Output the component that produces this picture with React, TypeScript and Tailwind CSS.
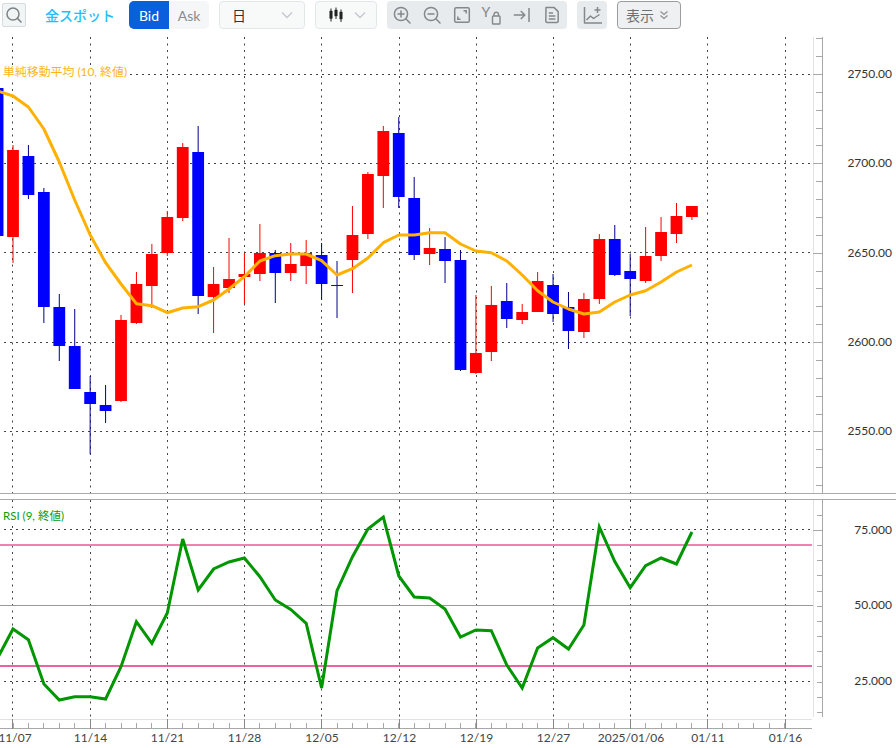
import React from "react";

const latin = { fontFamily: 'Lato, "Noto Sans CJK JP", sans-serif' };
const step = 15.43;
const cx = (i: number) => 13 + step * (i - 1);
const gridX = [12.5, 90.5, 167.5, 244.5, 321.5, 399.5, 476.5, 553.5, 630.5, 707.5, 785.5];

// [wick high, body top, body bottom, wick low, 0=blue 1=red]
const candles: [number, number, number, number, number][] = [
  [86, 88, 236, 237, 0], [145, 150, 237, 263, 1], [145, 156, 195, 199, 0], [188, 192, 307, 323, 0],
  [294, 307, 346, 361, 0], [309, 346, 389, 389, 0], [376, 392, 404, 454, 0], [385, 405, 411, 423, 0],
  [315, 320, 401, 402, 1], [272, 284, 323, 324, 1], [244, 254, 286, 308, 1], [211, 217, 253, 256, 1],
  [143, 147, 218, 221, 1], [126, 152, 296, 314, 0], [267, 284, 297, 333, 1], [238, 279, 288, 293, 1],
  [253, 274, 277, 304, 1], [224, 253, 274, 281, 1], [250, 253, 273, 303, 0], [243, 264, 273, 281, 1],
  [240, 253, 266, 284, 1], [243, 255, 284, 300, 0], [261, 285, 286, 318, 0], [206, 235, 260, 293, 1],
  [172, 174, 234, 239, 1], [126, 131, 176, 208, 1], [117, 133, 197, 208, 0], [177, 198, 255, 260, 0],
  [228, 248, 254, 265, 1], [237, 249, 261, 283, 0], [250, 260, 370, 371, 0], [295, 353, 373, 374, 1],
  [286, 305, 352, 361, 1], [283, 301, 319, 328, 0], [304, 312, 320, 324, 1], [272, 281, 312, 312, 1],
  [274, 285, 314, 322, 0], [292, 307, 331, 349, 0], [293, 299, 332, 338, 1], [234, 239, 299, 304, 1],
  [225, 239, 275, 276, 0], [254, 271, 279, 316, 0], [227, 256, 281, 283, 1], [217, 232, 256, 261, 1],
  [203, 216, 234, 243, 1], [206, 206, 217, 220, 1],
];

const ma = [91, 96, 107, 129, 162, 200, 235, 262.7, 284, 303.7, 305.7, 312.7, 308, 306.7, 300, 289, 276.7, 261, 255.7, 254, 254, 260.7, 275, 268.7, 258, 242.7, 235, 235, 232.7, 232.7, 244, 251, 252.7, 261, 275, 290.7, 302, 309, 314, 312, 302, 295, 290.7, 282, 272, 265];
const rsi = [658, 629, 639.7, 684, 700, 696.7, 696.7, 699, 666.7, 621.7, 643.3, 613, 539, 590, 569, 562, 558, 576.7, 600, 609.5, 623.3, 688, 590.7, 556.7, 529, 517, 576, 597, 598, 609, 637, 630, 630.7, 665, 688, 648, 637.7, 649, 625, 527, 561.5, 587.7, 565.7, 558, 564, 532];

const pts = (ys: number[]) => ys.map((y, i) => `${cx(i).toFixed(1)},${y}`).join(" ");

const Ico = ({ children, w = 20 }: { children: React.ReactNode; w?: number }) => (
  <svg width={w} height={20} viewBox="0 0 20 20" fill="none" stroke="#85888b" strokeWidth="1.5" strokeLinecap="round" strokeLinejoin="round">
    {children}
  </svg>
);

const IconBtn = ({ children }: { children: React.ReactNode }) => (
  <div className="flex w-[30px] items-center justify-center">{children}</div>
);

const Chevron = () => (
  <svg width="12" height="8" viewBox="0 0 12 8" fill="none" stroke="#c3c9cd" strokeWidth="1.4">
    <path d="M1 1.5 L6 6.5 L11 1.5" />
  </svg>
);

function Toolbar() {
  return (
    <div className="flex h-[30px] items-center text-[14px]" style={latin}>
      <div className="ml-[2px] flex h-[24px] w-[24px] items-center justify-center rounded-[2px] border border-[#d5dcdf] bg-[#f2f5f6]">
        <svg width="18" height="18" viewBox="0 0 18 18" fill="none" stroke="#7c8488" strokeWidth="1.5">
          <circle cx="8" cy="8" r="6" />
          <path d="M12.4 12.4 L16.5 16.5" />
        </svg>
      </div>
      <div className="ml-[19px] w-[70px] whitespace-nowrap text-[14px] font-medium text-[#1ec0fb]">金スポット</div>
      <div className="ml-[14px] flex h-[28px] w-[80px] overflow-hidden rounded-[5px]">
        <div className="flex w-[40px] items-center justify-center bg-[#0a5fdc] text-white">Bid</div>
        <div className="flex w-[40px] items-center justify-center bg-[#f5f6f7] text-[#878c91]">Ask</div>
      </div>
      <div className="ml-[10px] flex h-[28px] w-[86px] items-center justify-between rounded-[4px] border border-[#e2e7ea] bg-[#f8fafa] pl-[12px] pr-[11px] text-[#333]">
        <span>日</span>
        <Chevron />
      </div>
      <div className="ml-[10px] flex h-[28px] w-[62px] items-center justify-between rounded-[4px] border border-[#e2e7ea] bg-[#f8fafa] pl-[12px] pr-[10px]">
        <svg width="16" height="16" viewBox="0 0 16 16" stroke="#222" fill="#222">
          <path d="M3 1.5 V14.5 M8 0.5 V12 M13 2.5 V15" strokeWidth="1" />
          <rect x="1.8" y="4" width="2.4" height="7.5" strokeWidth="0.4" />
          <rect x="6.8" y="3" width="2.4" height="6" strokeWidth="0.4" />
          <rect x="11.8" y="5" width="2.4" height="7" strokeWidth="0.4" />
        </svg>
        <Chevron />
      </div>
      <div className="ml-[10px] flex h-[28px] w-[180px] rounded-[4px] bg-[#e7ebed]">
        <IconBtn>
          <Ico>
            <circle cx="9" cy="9" r="6.6" />
            <path d="M18 18 L13.8 13.8 M9 6 V12 M6 9 H12" />
          </Ico>
        </IconBtn>
        <IconBtn>
          <Ico>
            <circle cx="9" cy="9" r="6.6" />
            <path d="M18 18 L13.8 13.8 M6 9 H12" />
          </Ico>
        </IconBtn>
        <IconBtn>
          <Ico>
            <rect x="2.7" y="2.7" width="14.6" height="14.6" rx="1.5" />
            <path d="M11.5 5.8 H14.2 V8.5 M5.8 11.5 V14.2 H8.5" strokeLinecap="butt" strokeLinejoin="miter" />
          </Ico>
        </IconBtn>
        <IconBtn>
          <svg width="22" height="24" viewBox="0 0 22 24" fill="none" stroke="#85888b" strokeWidth="1.4">
            <text x="0.5" y="14" fontSize="14" fill="#85888b" stroke="none" style={latin}>Y</text>
            <rect x="11.5" y="13" width="7.5" height="8" rx="0.8" />
            <path d="M13 13 V11 A2.3 2.3 0 0 1 17.5 11 V13" />
          </svg>
        </IconBtn>
        <IconBtn>
          <Ico>
            <path d="M1.8 10 H12.6 M8.8 6 L12.8 10 L8.8 14" strokeLinecap="butt" />
            <path d="M17 3 V17" strokeLinecap="butt" />
          </Ico>
        </IconBtn>
        <IconBtn>
          <Ico>
            <path d="M4 2.6 H12.2 L16.2 6.6 V16.2 A1.2 1.2 0 0 1 15 17.4 H5 A1.2 1.2 0 0 1 3.8 16.2 Z" />
            <path d="M6.8 8 H11 M6.8 11 H13.4 M6.8 14 H13.4" strokeLinecap="butt" />
          </Ico>
        </IconBtn>
      </div>
      <div className="ml-[10px] flex h-[28px] w-[30px] items-center justify-center rounded-[4px] bg-[#e7ebed]">
        <Ico w={22}>
          <path d="M2.5 2 V18 H20" strokeLinecap="butt" />
          <path d="M4.5 15 L8.5 11 L11.5 13.5 L17.5 9.5" strokeLinecap="butt" />
          <path d="M15.5 2 V8 M12.5 5 H18.5" strokeLinecap="butt" />
        </Ico>
      </div>
      <div className="ml-[10px] flex h-[28px] w-[64px] items-center rounded-[4px] border border-[#9a9c9e] bg-[#eef0f1] pl-[8px] text-[#6c7075]">
        <span>表示</span>
        <svg className="ml-[5px]" width="10" height="10" viewBox="0 0 10 10" fill="none" stroke="#8b8f93" strokeWidth="1.1">
          <path d="M1.5 1.5 L5 4.5 L8.5 1.5 M1.5 5.5 L5 8.5 L8.5 5.5" />
        </svg>
      </div>
    </div>
  );
}

function VGrid({ y1, y2 }: { y1: number; y2: number }) {
  return (
    <>
      {gridX.map((x) => (
        <line key={x} x1={x} x2={x} y1={y1} y2={y2} stroke="#444" strokeDasharray="2 4.5" />
      ))}
    </>
  );
}

const HDash = ({ y }: { y: number }) => (
  <line x1="4" x2="813" y1={y} y2={y} stroke="#444" strokeDasharray="2 4" />
);

function MainPanel() {
  const labels: [number, string][] = [
    [74, "2750.00"], [163, "2700.00"], [253, "2650.00"], [342, "2600.00"], [431, "2550.00"],
  ];
  const ticks: number[] = [];
  for (let k = -2; k <= 23; k++) ticks.push(Math.round(74 + 17.87 * k) + 0.5);
  return (
    <svg className="block" width="896" height="463" viewBox="0 30 896 463" style={latin}>
      <VGrid y1={37} y2={493} />
      {labels.map(([y]) => (
        <HDash key={y} y={y + 0.5 - (y === 253 ? 1 : 0)} />
      ))}
      <line x1="813.5" x2="813.5" y1="37" y2="493" stroke="#e3e3e3" />
      <line x1="822.5" x2="822.5" y1="37" y2="493" stroke="#a8a8a8" />
      {ticks.filter((y) => y > 37 && y < 493).map((y, i) => (
        <line key={y} x1={i % 5 === 2 ? 813 : 816} x2="822" y1={y} y2={y} stroke="#a8a8a8" />
      ))}
      {candles.map(([hi, top, bot, lo, red], i) => {
        const x = cx(i);
        const c = red ? "#ff0000" : "#0000ff";
        return (
          <g key={i}>
            <line x1={x} x2={x} y1={hi} y2={lo} stroke={red ? "#ff0000" : "#00008b"} strokeWidth="1" />
            <rect x={x - 5.9} y={top} width="11.8" height={bot - top} fill={c} />
          </g>
        );
      })}
      <polyline points={pts(ma)} fill="none" stroke="#ffb000" strokeWidth="3" strokeLinejoin="round" />
      <rect x="0" y="65" width="128" height="15" fill="#fff" />
      <text x="3" y="76" fontSize="11.9" fill="#ffb512">単純移動平均 (10, 終値)</text>
      {labels.map(([y, t]) => (
        <text key={t} x="892" y={y + 4} fontSize="12" fill="#333" textAnchor="end">{t}</text>
      ))}
    </svg>
  );
}

function RsiPanel() {
  const ticks: number[] = [];
  for (let k = -1; k <= 12; k++) ticks.push(Math.round(530 + 15.15 * k));
  const dates: [number, string][] = [
    [15, "11/07"], [90.5, "11/14"], [167.5, "11/21"], [244.5, "11/28"], [322, "12/05"], [399.5, "12/12"],
    [476.5, "12/19"], [553.5, "12/27"], [631, "2025/01/06"], [708, "01/11"], [785.5, "01/16"],
  ];
  const axis: [number, string][] = [[530, "75.000"], [605, "50.000"], [681, "25.000"]];
  return (
    <svg className="block" width="896" height="248" viewBox="0 500 896 248" style={latin}>
      <VGrid y1={500} y2={719} />
      <HDash y={529.5} />
      <line x1="0" x2="813" y1="605.5" y2="605.5" stroke="#999" />
      <HDash y={681.5} />
      <line x1="0" x2="812" y1="545" y2="545" stroke="#ee82b0" strokeWidth="2" />
      <line x1="0" x2="812" y1="666" y2="666" stroke="#ea64a2" strokeWidth="2" />
      <line x1="813.5" x2="813.5" y1="500" y2="717" stroke="#e3e3e3" />
      <line x1="822.5" x2="822.5" y1="500" y2="717" stroke="#a8a8a8" />
      {ticks.map((y) => (
        <line key={y} x1={y === 530 || y === 605 || y === 681 ? 813 : 817} x2="822" y1={y + 0.5} y2={y + 0.5} stroke="#a8a8a8" />
      ))}
      <line x1="0" x2="812" y1="719.5" y2="719.5" stroke="#e2e2e2" />
      <line x1="0" x2="812" y1="728.5" y2="728.5" stroke="#a8a8a8" />
      {Array.from({ length: 52 }, (_, i) => (
        <line key={i} x1={Math.floor(cx(i)) + 0.5} x2={Math.floor(cx(i)) + 0.5} y1="723" y2="728" stroke="#a8a8a8" />
      ))}
      {gridX.map((x) => (
        <line key={x} x1={x} x2={x} y1="719" y2="729" stroke="#888" />
      ))}
      <polyline points={pts(rsi)} fill="none" stroke="#009600" strokeWidth="3" strokeLinejoin="miter" />
      <rect x="0" y="508" width="67" height="14" fill="#fff" />
      <text x="3" y="519.5" fontSize="11.5" fill="#0a9c0a">RSI (9, 終値)</text>
      {axis.map(([y, t]) => (
        <text key={t} x="892" y={y + 4} fontSize="12" fill="#333" textAnchor="end">{t}</text>
      ))}
      {dates.map(([x, t]) => (
        <text key={t} x={x} y="742" fontSize="12" fill="#444" textAnchor="middle">{t}</text>
      ))}
    </svg>
  );
}

export default function App() {
  return (
    <div className="h-[748px] w-[896px] overflow-hidden bg-white">
      <Toolbar />
      <MainPanel />
      <div className="h-[7px] border-y border-[#aaaaaa] bg-white" />
      <RsiPanel />
    </div>
  );
}
